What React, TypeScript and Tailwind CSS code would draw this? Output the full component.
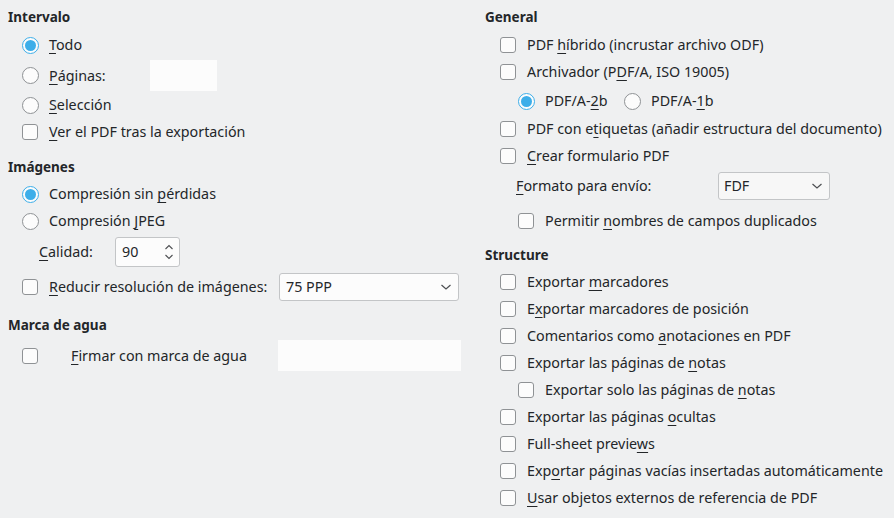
import type { ReactNode } from "react";

// mnemonic letter, underlined like the KDE/Qt dialog
function M({ children }: { children: ReactNode }) {
  return <span className="underline decoration-1 underline-offset-[3px]">{children}</span>;
}

function Check({ checked = false }: { checked?: boolean }) {
  return (
    <span className="w-4 h-4 shrink-0 rounded-[3px] border border-[#8f9295] bg-[#fcfcfc] flex items-center justify-center">
      {checked && <span className="w-2 h-2 bg-[#3daee9]" />}
    </span>
  );
}

function Radio({ checked = false }: { checked?: boolean }) {
  return checked ? (
    <span className="w-[17px] h-[17px] shrink-0 rounded-full border border-[#3daee9] bg-[#fcfcfc] flex items-center justify-center">
      <span className="w-[11px] h-[11px] rounded-full bg-[#3daee9]" />
    </span>
  ) : (
    <span className="w-[17px] h-[17px] shrink-0 rounded-full border border-[#8f9295] bg-[#fcfcfc]" />
  );
}

function Chevron() {
  return (
    <svg width="12" height="8" viewBox="0 0 12 8" className="shrink-0">
      <path d="M1.5 2 L6 6 L10.5 2" fill="none" stroke="#4d4f52" strokeWidth="1.2" />
    </svg>
  );
}

function Heading({ children, mt = "" }: { children: ReactNode; mt?: string }) {
  return <div className={`h-[22px] flex items-center font-bold text-[13.5px] ${mt}`}>{children}</div>;
}

function CheckRow({ children, indent = false }: { children: ReactNode; indent?: boolean }) {
  return (
    <div className={`h-[22px] mt-[5px] flex items-center gap-[11px] ${indent ? "pl-[33px]" : "pl-[15px]"}`}>
      <Check />
      <span>{children}</span>
    </div>
  );
}

export default function App() {
  return (
    <div
      className="w-[894px] h-[518px] bg-[#eff0f1] text-[#232629] text-[14.3px] flex overflow-hidden"
      style={{ fontFamily: '"Noto Sans", "DejaVu Sans", sans-serif' }}
    >
      {/* left column */}
      <div className="w-[470px] pl-[8px] pt-[6px] flex flex-col">
        <Heading>Intervalo</Heading>
        <div className="h-[22px] mt-[6px] pl-[14px] flex items-center gap-[10px]">
          <Radio checked />
          <span><M>T</M>odo</span>
        </div>
        <div className="h-[31px] mt-[4px] pl-[14px] flex items-center">
          <Radio />
          <span className="ml-[10px] w-[101px]"><M>P</M>áginas:</span>
          <div className="w-[67px] h-[31px] bg-[#fcfcfc]" />
        </div>
        <div className="h-[22px] mt-[3px] pl-[14px] flex items-center gap-[10px]">
          <Radio />
          <span><M>S</M>elección</span>
        </div>
        <div className="h-[22px] mt-[5px] pl-[14px] flex items-center gap-[11px]">
          <Check />
          <span><M>V</M>er el PDF tras la exportación</span>
        </div>

        <Heading mt="mt-[13px]">Imágenes</Heading>
        <div className="h-[22px] mt-[5px] pl-[14px] flex items-center gap-[10px]">
          <Radio checked />
          <span>Compresión sin <M>p</M>érdidas</span>
        </div>
        <div className="h-[22px] mt-[5px] pl-[14px] flex items-center gap-[10px]">
          <Radio />
          <span>Compresión <M>J</M>PEG</span>
        </div>
        <div className="h-[30px] mt-[5px] pl-[31px] flex items-center">
          <span className="w-[76px]"><M>C</M>alidad:</span>
          <div className="w-[65px] h-[30px] rounded-[3px] border border-[#c3c5c7] bg-[#fcfcfc] flex items-center pl-[6px] pr-[5px]">
            <span className="flex-1">90</span>
            <svg width="10" height="18" viewBox="0 0 10 18">
              <path d="M1.5 6 L5 2.5 L8.5 6" fill="none" stroke="#4d4f52" strokeWidth="1.1" />
              <path d="M1.5 12 L5 15.5 L8.5 12" fill="none" stroke="#4d4f52" strokeWidth="1.1" />
            </svg>
          </div>
        </div>
        <div className="h-[28px] mt-[6px] pl-[14px] flex items-center">
          <Check />
          <span className="ml-[11px] w-[230px]"><M>R</M>educir resolución de imágenes:</span>
          <div className="w-[180px] h-[28px] rounded-[3px] border border-[#c3c5c7] bg-[#fcfcfc] flex items-center pl-[6px] pr-[6px]">
            <span className="flex-1">75 PPP</span>
            <Chevron />
          </div>
        </div>

        <Heading mt="mt-[13px]">Marca de agua</Heading>
        <div className="h-[31px] mt-[4px] pl-[14px] flex items-center">
          <Check />
          <span className="ml-[33px] w-[207px]"><M>F</M>irmar con marca de agua</span>
          <div className="w-[183px] h-[31px] bg-[#fcfcfc]" />
        </div>
      </div>

      {/* right column */}
      <div className="flex-1 pl-[15px] pt-[6px] flex flex-col">
        <Heading>General</Heading>
        <div className="h-[22px] mt-[6px] pl-[15px] flex items-center gap-[11px]">
          <Check />
          <span>PDF <M>h</M>íbrido (incrustar archivo ODF)</span>
        </div>
        <CheckRow>Archivador (P<M>D</M>F/A, ISO 19005)</CheckRow>
        <div className="h-[22px] mt-[7px] pl-[33px] flex items-center">
          <Radio checked />
          <span className="ml-[10px] w-[79px]">PDF/A-<M>2</M>b</span>
          <Radio />
          <span className="ml-[10px]">PDF/A-<M>1</M>b</span>
        </div>
        <div className="h-[22px] mt-[6px] pl-[15px] flex items-center gap-[11px]">
          <Check />
          <span>PDF con e<M>t</M>iquetas (añadir estructura del documento)</span>
        </div>
        <CheckRow><M>C</M>rear formulario PDF</CheckRow>
        <div className="h-[28px] mt-[5px] pl-[31px] flex items-center">
          <span className="w-[202px]"><M>F</M>ormato para envío:</span>
          <div className="w-[112px] h-[28px] rounded-[3px] border border-[#c3c5c7] bg-[#f7f7f7] flex items-center pl-[5px] pr-[6px]">
            <span className="flex-1">FDF</span>
            <Chevron />
          </div>
        </div>
        <div className="h-[22px] mt-[10px] pl-[33px] flex items-center gap-[11px]">
          <Check />
          <span>Permitir <M>n</M>ombres de campos duplicados</span>
        </div>

        <Heading mt="mt-[12px]">Structure</Heading>
        <CheckRow>Exportar <M>m</M>arcadores</CheckRow>
        <CheckRow>E<M>x</M>portar marcadores de posición</CheckRow>
        <CheckRow>Comentarios como <M>a</M>notaciones en PDF</CheckRow>
        <CheckRow>Exportar las páginas de <M>n</M>otas</CheckRow>
        <CheckRow indent>Exportar solo las páginas de <M>n</M>otas</CheckRow>
        <CheckRow>Exportar las páginas <M>o</M>cultas</CheckRow>
        <CheckRow>Full-sheet previe<M>w</M>s</CheckRow>
        <CheckRow>Exp<M>o</M>rtar páginas vacías insertadas automáticamente</CheckRow>
        <CheckRow><M>U</M>sar objetos externos de referencia de PDF</CheckRow>
      </div>
    </div>
  );
}
